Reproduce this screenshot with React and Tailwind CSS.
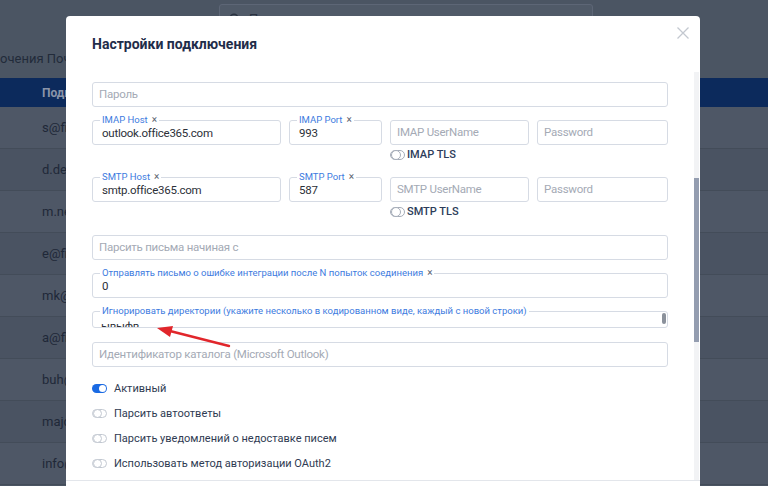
import React from "react";

const emails = [
  "s@firma.ru",
  "d.denisova@firma.ru",
  "m.nesterov@firma.ru",
  "e@firma.ru",
  "mk@firma.ru",
  "a@firma.ru",
  "buh@firma.ru",
  "majdanova@firma.ru",
  "info@firma.ru",
];

// поле с плавающей подписью на верхней границе
function Field({ label, value, className = "" }) {
  return (
    <div className={`relative flex h-[25px] items-center rounded-[3px] border border-[#d6dbe4] pl-[9px] ${className}`}>
      <span className="absolute left-[7px] top-[-7px] flex items-center bg-white px-[2px] text-[9.5px] leading-[12px] text-[#3d7be0]">
        {label}
        {value !== undefined && <span className="ml-[4px] text-[10px] text-[#5b6270]">×</span>}
      </span>
      <span className="text-[11.5px] leading-[14px] tracking-[-0.25px] text-[#2c3038]">{value}</span>
    </div>
  );
}

function Input({ placeholder, className = "" }) {
  return (
    <div className={`flex h-[25px] items-center rounded-[3px] border border-[#d6dbe4] pl-[6px] text-[11.5px] tracking-[-0.25px] text-[#a4aab5] ${className}`}>
      {placeholder}
    </div>
  );
}

function SmallToggle() {
  return (
    <span className="flex h-[10px] w-[15px] items-center rounded-full border border-[#a6adb9]">
      <span className="h-[10px] w-[10px] rounded-full border border-[#a6adb9] bg-white"></span>
    </span>
  );
}

function Toggle({ on, label }) {
  return (
    <div className="flex h-[25px] items-center gap-[7px]">
      {on ? (
        <span className="flex h-[9px] w-[15px] items-center justify-end rounded-full bg-[#1a6ae3] pr-[1px]">
          <span className="h-[7px] w-[7px] rounded-full bg-white"></span>
        </span>
      ) : (
        <span className="flex h-[9px] w-[15px] items-center rounded-full border border-[#c2c8d1]">
          <span className="h-[9px] w-[9px] rounded-full border border-[#c2c8d1] bg-white"></span>
        </span>
      )}
      <span className="text-[11px] leading-[14px] text-[#2f3b52]">{label}</span>
    </div>
  );
}

export default function App() {
  return (
    <div className="relative h-[486px] w-[768px] overflow-hidden bg-[#4b5563] font-['Roboto',sans-serif]">
      {/* страница под затемнением */}
      <div className="flex flex-col">
        <div className="ml-[219px] mt-[4px] flex h-[30px] w-[374px] items-center gap-[8px] rounded-[3px] border border-[#5d6676] bg-[#505a68] pl-[9px]">
          <svg width="12" height="12" viewBox="0 0 12 12" fill="none" stroke="#2a3240" strokeWidth="1.4">
            <circle cx="5" cy="5" r="3.8" />
            <path d="M8 8l3 3" />
          </svg>
          <span className="text-[13px] text-[#2a3240]">Поиск</span>
        </div>
        <div className="mt-[17px] whitespace-nowrap text-[13px] leading-[16px] text-[#222b3a]">
          очения Почтовых ящиков
        </div>
        <div className="mt-[11px] flex h-[29px] items-center bg-[#0c2a5c] pl-[42px] text-[12px] font-bold text-[#8a94a8]">
          Подключение
        </div>
        {emails.map((e, i) => (
          <div
            key={e}
            className={`flex h-[42px] items-center border-b border-[#434c59] pl-[42px] text-[13px] text-[#1f2838] ${i % 2 === 0 ? "bg-[#4e5766]" : "bg-[#4a5362]"}`}
          >
            {e}
          </div>
        ))}
      </div>

      {/* модальное окно */}
      <div className="absolute left-[66px] top-[16px] flex h-[470px] w-[634px] flex-col rounded-t-[4px] bg-white">
        <div className="relative h-[56px] shrink-0 pl-[26px] pt-[19px]">
          <h2 className="text-[14px] font-bold leading-[18px] text-[#1f2d4a]">Настройки подключения</h2>
          <button className="absolute right-[11px] top-[11px] p-0">
            <svg width="12" height="12" viewBox="0 0 12 12" fill="none" stroke="#c3c8d0" strokeWidth="1.3">
              <path d="M0.5 0.5l11 11M11.5 0.5l-11 11" />
            </svg>
          </button>
        </div>

        <div className="flex h-[408px] shrink-0 overflow-hidden">
          <div className="flex-1 px-[26px] pt-[10px]">
            <Input placeholder="Пароль" className="h-[24px]" />

            <div className="mt-[13px] flex gap-[8px]">
              <Field label="IMAP Host" value="outlook.office365.com" className="h-[24px] w-[189px]" />
              <Field label="IMAP Port" value="993" className="h-[24px] w-[93px]" />
              <div className="flex w-[139px] flex-col">
                <Input placeholder="IMAP UserName" className="h-[24px]" />
                <div className="mt-[3px] flex h-[14px] items-center gap-[2px]">
                  <SmallToggle />
                  <span className="text-[11px] font-medium text-[#2d3c5a]">IMAP TLS</span>
                </div>
              </div>
              <Input placeholder="Password" className="h-[24px] flex-1" />
            </div>

            <div className="mt-[15px] flex gap-[8px]">
              <Field label="SMTP Host" value="smtp.office365.com" className="w-[189px]" />
              <Field label="SMTP Port" value="587" className="w-[93px]" />
              <div className="flex w-[139px] flex-col">
                <Input placeholder="SMTP UserName" />
                <div className="mt-[3px] flex h-[14px] items-center gap-[2px]">
                  <SmallToggle />
                  <span className="text-[11px] font-medium text-[#2d3c5a]">SMTP TLS</span>
                </div>
              </div>
              <Input placeholder="Password" className="flex-1" />
            </div>

            <Input placeholder="Парсить письма начиная с" className="mt-[16px]" />

            <Field
              label="Отправлять письмо о ошибке интеграции после N попыток соединения"
              value="0"
              className="mt-[13px]"
            />

            <div className="relative mt-[13px] h-[17px] rounded-[3px] border border-[#d6dbe4]">
              <span className="absolute left-[7px] top-[-7px] bg-white px-[2px] text-[9.5px] leading-[12px] text-[#3d7be0]">
                Игнорировать директории (укажите несколько в кодированном виде, каждый с новой строки)
              </span>
              <div className="h-[15px] overflow-hidden pl-[8px] pt-[7px] text-[11.5px] leading-[14px] tracking-[-0.25px] text-[#2c3038]">
                ывыфв
              </div>
              <span className="absolute right-[1px] top-[1px] h-[11px] w-[4px] rounded-[2px] bg-[#8b919b]"></span>
            </div>

            <Input placeholder="Идентификатор каталога (Microsoft Outlook)" className="mt-[14px] h-[24px]" />

            <div className="mt-[9px] flex flex-col">
              <Toggle on label="Активный" />
              <Toggle label="Парсить автоответы" />
              <Toggle label="Парсить уведомлений о недоставке писем" />
              <Toggle label="Использовать метод авторизации OAuth2" />
            </div>
          </div>

          {/* полоса прокрутки */}
          <div className="mr-[1px] w-[5px] bg-[#f2f3f5] pt-[106px]">
            <div className="h-[164px] w-[5px] bg-[#949db0]"></div>
          </div>
        </div>

        <div className="flex-1 border-t border-[#e3e6eb]"></div>
      </div>

      {/* красная стрелка-пометка */}
      <svg className="pointer-events-none absolute left-0 top-0" width="768" height="486">
        <line x1="229" y1="346" x2="168" y2="330.5" stroke="#e1262b" strokeWidth="2.4" strokeLinecap="round" />
        <polygon points="157,328 173,326 170,337" fill="#e1262b" />
      </svg>
    </div>
  );
}
